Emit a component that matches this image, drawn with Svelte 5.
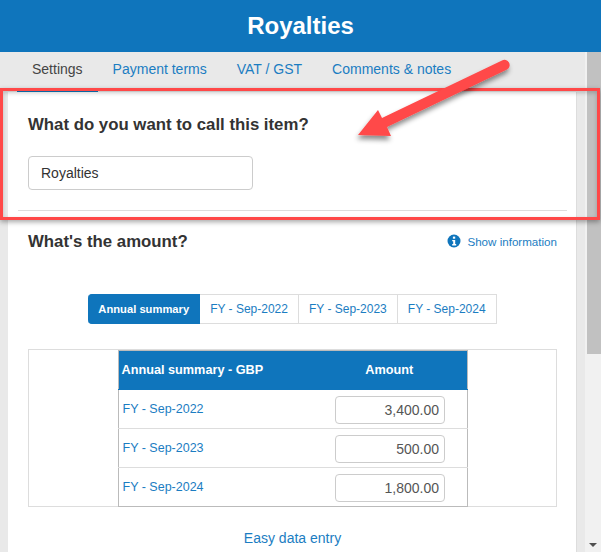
<script>
    const tabs = ["Settings", "Payment terms", "VAT / GST", "Comments & notes"];
    const periods = ["Annual summary", "FY - Sep-2022", "FY - Sep-2023", "FY - Sep-2024"];
    const rows = [
        { label: "FY - Sep-2022", amount: "3,400.00" },
        { label: "FY - Sep-2023", amount: "500.00" },
        { label: "FY - Sep-2024", amount: "1,800.00" }
    ];
</script>

<div class="page">
    <header><h1>Royalties</h1></header>

    <div class="body">
        <main>
            <nav>
                {#each tabs as tab, i}
                    <span class="tab" class:active={i === 0}>{tab}</span>
                {/each}
            </nav>

            <section class="panel">
                <h2>What do you want to call this item?</h2>
                <div class="name-field">Royalties</div>
                <hr />

                <div class="amount-head">
                    <h2>What's the amount?</h2>
                    <span class="info">
                        <svg viewBox="0 0 14 14" width="14" height="14">
                            <circle cx="7" cy="7" r="6.5" fill="#0f75bc" />
                            <rect x="5.900" y="2.600" width="2.300" height="2.100" fill="#fff" />
                            <path d="M5.200 5.900h3v4.200h1v1.300H5.200v-1.300h1V7.200h-1z" fill="#fff" />
                        </svg>
                        Show information
                    </span>
                </div>

                <div class="periods">
                    {#each periods as period, i}
                        <span class="period" class:current={i === 0}>{period}</span>
                    {/each}
                </div>

                <div class="table-box">
                    <table>
                        <colgroup>
                            <col class="col-name" />
                            <col />
                        </colgroup>
                        <thead>
                            <tr>
                                <th class="name">Annual summary - GBP</th>
                                <th>Amount</th>
                            </tr>
                        </thead>
                        <tbody>
                            {#each rows as row}
                                <tr>
                                    <td class="label">{row.label}</td>
                                    <td class="cell"><div class="amount">{row.amount}</div></td>
                                </tr>
                            {/each}
                        </tbody>
                    </table>
                </div>

                <div class="easy">Easy data entry</div>
            </section>
        </main>

        <div class="scrollbar">
            <div class="thumb"></div>
            <svg class="down" viewBox="0 0 8 4" width="8" height="4"><path d="M0 0h8L4 4z" fill="#505050" /></svg>
        </div>
    </div>

    <!-- annotation drawn over the screenshot -->
    <div class="callout"></div>
    <svg class="arrow" viewBox="0 0 601 552" width="601" height="552">
        <defs>
            <filter id="soft" x="-20%" y="-20%" width="140%" height="150%">
                <feDropShadow dx="-1" dy="4" stdDeviation="2.500" flood-color="#000" flood-opacity="0.45" />
            </filter>
        </defs>
        <path
            d="M378 110 L382 118 L502 60.500 A5 5 0 0 1 507 69.500 L387 127 L391 136 L358 135 Z"
            fill="#ff4848"
            filter="url(#soft)"
        />
    </svg>
</div>

<style>
    :global(body) {
        margin: 0;
        overflow: hidden;
    }

    .page {
        position: relative;
        width: 601px;
        height: 552px;
        overflow: hidden;
        font-family: "Liberation Sans", Arial, sans-serif;
        font-size: 14px;
        color: #333;
        background: #e9e9e9;
    }

    header {
        height: 52px;
        background: #0f75bc;
        display: flex;
        align-items: center;
        justify-content: center;
    }

    h1 {
        margin: 0;
        color: #fff;
        font-size: 24px;
        font-weight: bold;
    }

    .body {
        display: flex;
        height: 500px;
    }

    main {
        flex: 1;
        min-width: 0;
    }

    nav {
        display: flex;
        height: 40px;
        padding-left: 17px;
    }

    .tab {
        padding: 9px 15px 0;
        color: #1b7dc2;
        box-sizing: border-box;
    }

    .tab.active {
        color: #444;
        border-bottom: 2px solid #0f75bc;
    }

    .panel {
        margin: 0 8px;
        height: 460px;
        padding: 23px 19px 0 20px;
        box-sizing: border-box;
        background: #fff;
        border-right: 1px solid #ddd;
    }

    h2 {
        margin: 0;
        font-size: 16.800px;
        line-height: 20px;
        font-weight: bold;
        color: #333;
    }

    .name-field {
        margin-top: 21px;
        width: 225px;
        height: 34px;
        box-sizing: border-box;
        padding-left: 12px;
        line-height: 32px;
        border: 1px solid #ccc;
        border-radius: 4px;
    }

    hr {
        margin: 20px -10px 0;
        border: 0;
        border-top: 1px solid #ddd;
    }

    .amount-head {
        display: flex;
        justify-content: space-between;
        align-items: center;
        margin-top: 21px;
    }

    .info {
        display: flex;
        align-items: center;
        gap: 6px;
        margin-top: -2px;
        font-size: 11.600px;
        color: #1b7dc2;
    }

    .periods {
        display: flex;
        justify-content: center;
        margin-top: 42px;
        font-size: 12px;
        color: #1b7dc2;
    }

    .period {
        height: 30px;
        box-sizing: border-box;
        padding: 0 10px;
        line-height: 28px;
        border: 1px solid #ddd;
        border-left: 0;
    }

    .period.current {
        background: #0f75bc;
        border-color: #0f75bc;
        border-radius: 4px 0 0 4px;
        color: #fff;
        font-size: 11.200px;
        font-weight: bold;
        padding: 0 10px;
    }

    .table-box {
        margin-top: 25px;
        height: 158px;
        box-sizing: border-box;
        border: 1px solid #ddd;
        display: flex;
        justify-content: center;
    }

    table {
        width: 350px;
        height: 156px;
        table-layout: fixed;
        border-collapse: collapse;
        border: 1px solid #bbb;
        font-size: 12.500px;
    }

    .col-name {
        width: 194px;
    }

    th {
        height: 38px;
        padding: 0;
        background: #0f75bc;
        color: #fff;
        font-size: 12.700px;
        text-align: center;
    }

    th.name {
        text-align: left;
        padding-left: 3px;
        white-space: nowrap;
    }

    td {
        height: 39px;
        padding: 0;
        border-top: 1px solid #ddd;
        box-sizing: border-box;
    }

    tbody tr:first-child td {
        border-top-color: #0f75bc;
    }

    .label {
        padding-left: 4px;
        color: #1b7dc2;
    }

    .cell {
        padding-left: 23px;
    }

    .amount {
        width: 110px;
        height: 28px;
        margin-top: 2px;
        box-sizing: border-box;
        padding-right: 5px;
        line-height: 26px;
        text-align: right;
        font-size: 14px;
        color: #555;
        border: 1px solid #ccc;
        border-radius: 4px;
    }

    .easy {
        margin-top: 23px;
        text-align: center;
        color: #1b7dc2;
    }

    .scrollbar {
        position: relative;
        width: 16px;
        background: #f1f1f1;
    }

    .thumb {
        margin-left: 2px;
        height: 302px;
        background: #c1c1c1;
    }

    .down {
        position: absolute;
        left: 4px;
        bottom: 5px;
    }

    .callout {
        position: absolute;
        left: 0;
        top: 88px;
        width: 600px;
        height: 132px;
        box-sizing: border-box;
        border: 3px solid #ff4848;
        box-shadow: 0 2px 5px rgba(0, 0, 0, 0.35), inset 0 2px 4px rgba(0, 0, 0, 0.2);
    }

    .arrow {
        position: absolute;
        left: 0;
        top: 0;
    }
</style>
